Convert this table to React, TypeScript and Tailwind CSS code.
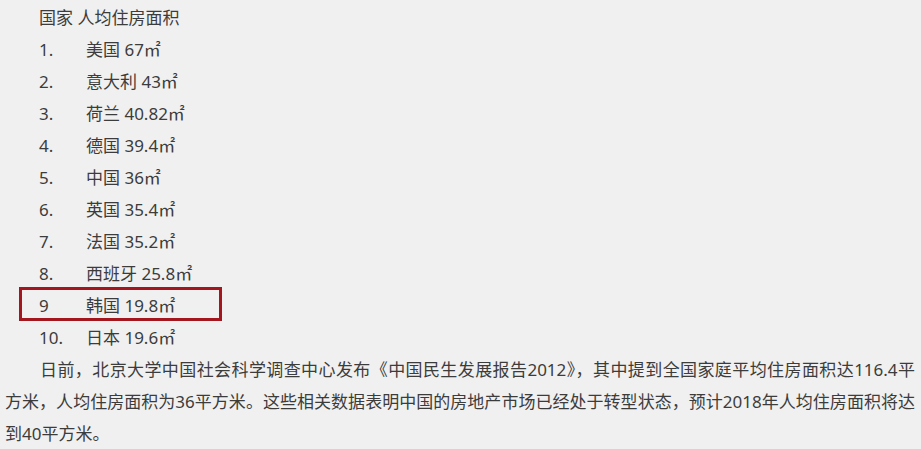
import React from "react";

const rows: [string, string][] = [
  ["1.", "美国 67㎡"],
  ["2.", "意大利 43㎡"],
  ["3.", "荷兰 40.82㎡"],
  ["4.", "德国 39.4㎡"],
  ["5.", "中国 36㎡"],
  ["6.", "英国 35.4㎡"],
  ["7.", "法国 35.2㎡"],
  ["8.", "西班牙 25.8㎡"],
  ["9", "韩国 19.8㎡"],
  ["10.", "日本 19.6㎡"],
];

export default function App() {
  return (
    <div
      className="w-[921px] h-[449px] overflow-hidden bg-[#f0f0f0] text-[#3c3c3c] text-[17px] leading-[32px] pt-[2px]"
      style={{ fontFamily: '"Noto Sans", "Noto Sans CJK SC", sans-serif' }}
    >
      <div className="pl-[39px]">国家 人均住房面积</div>
      {rows.map(([n, t], i) => (
        <div key={i} className="relative flex pl-[39px]">
          <span className="w-[47px] shrink-0">{n}</span>
          <span>{t}</span>
          {n === "9" && (
            <div className="absolute left-[19px] top-[-3px] w-[203px] h-[34px] border-[3px] border-[#a3161d]" />
          )}
        </div>
      ))}
      <div className="pl-[5px] pr-[6px]">
        <div className="pl-[35px] text-justify [text-align-last:justify] whitespace-nowrap">
          日前，北京大学中国社会科学调查中心发布《中国民生发展报告2012》，其中提到全国家庭平均住房面积达116.4平
        </div>
        <div className="text-justify [text-align-last:justify] whitespace-nowrap">
          方米，人均住房面积为36平方米。这些相关数据表明中国的房地产市场已经处于转型状态，预计2018年人均住房面积将达
        </div>
        <div>到40平方米。</div>
      </div>
    </div>
  );
}
